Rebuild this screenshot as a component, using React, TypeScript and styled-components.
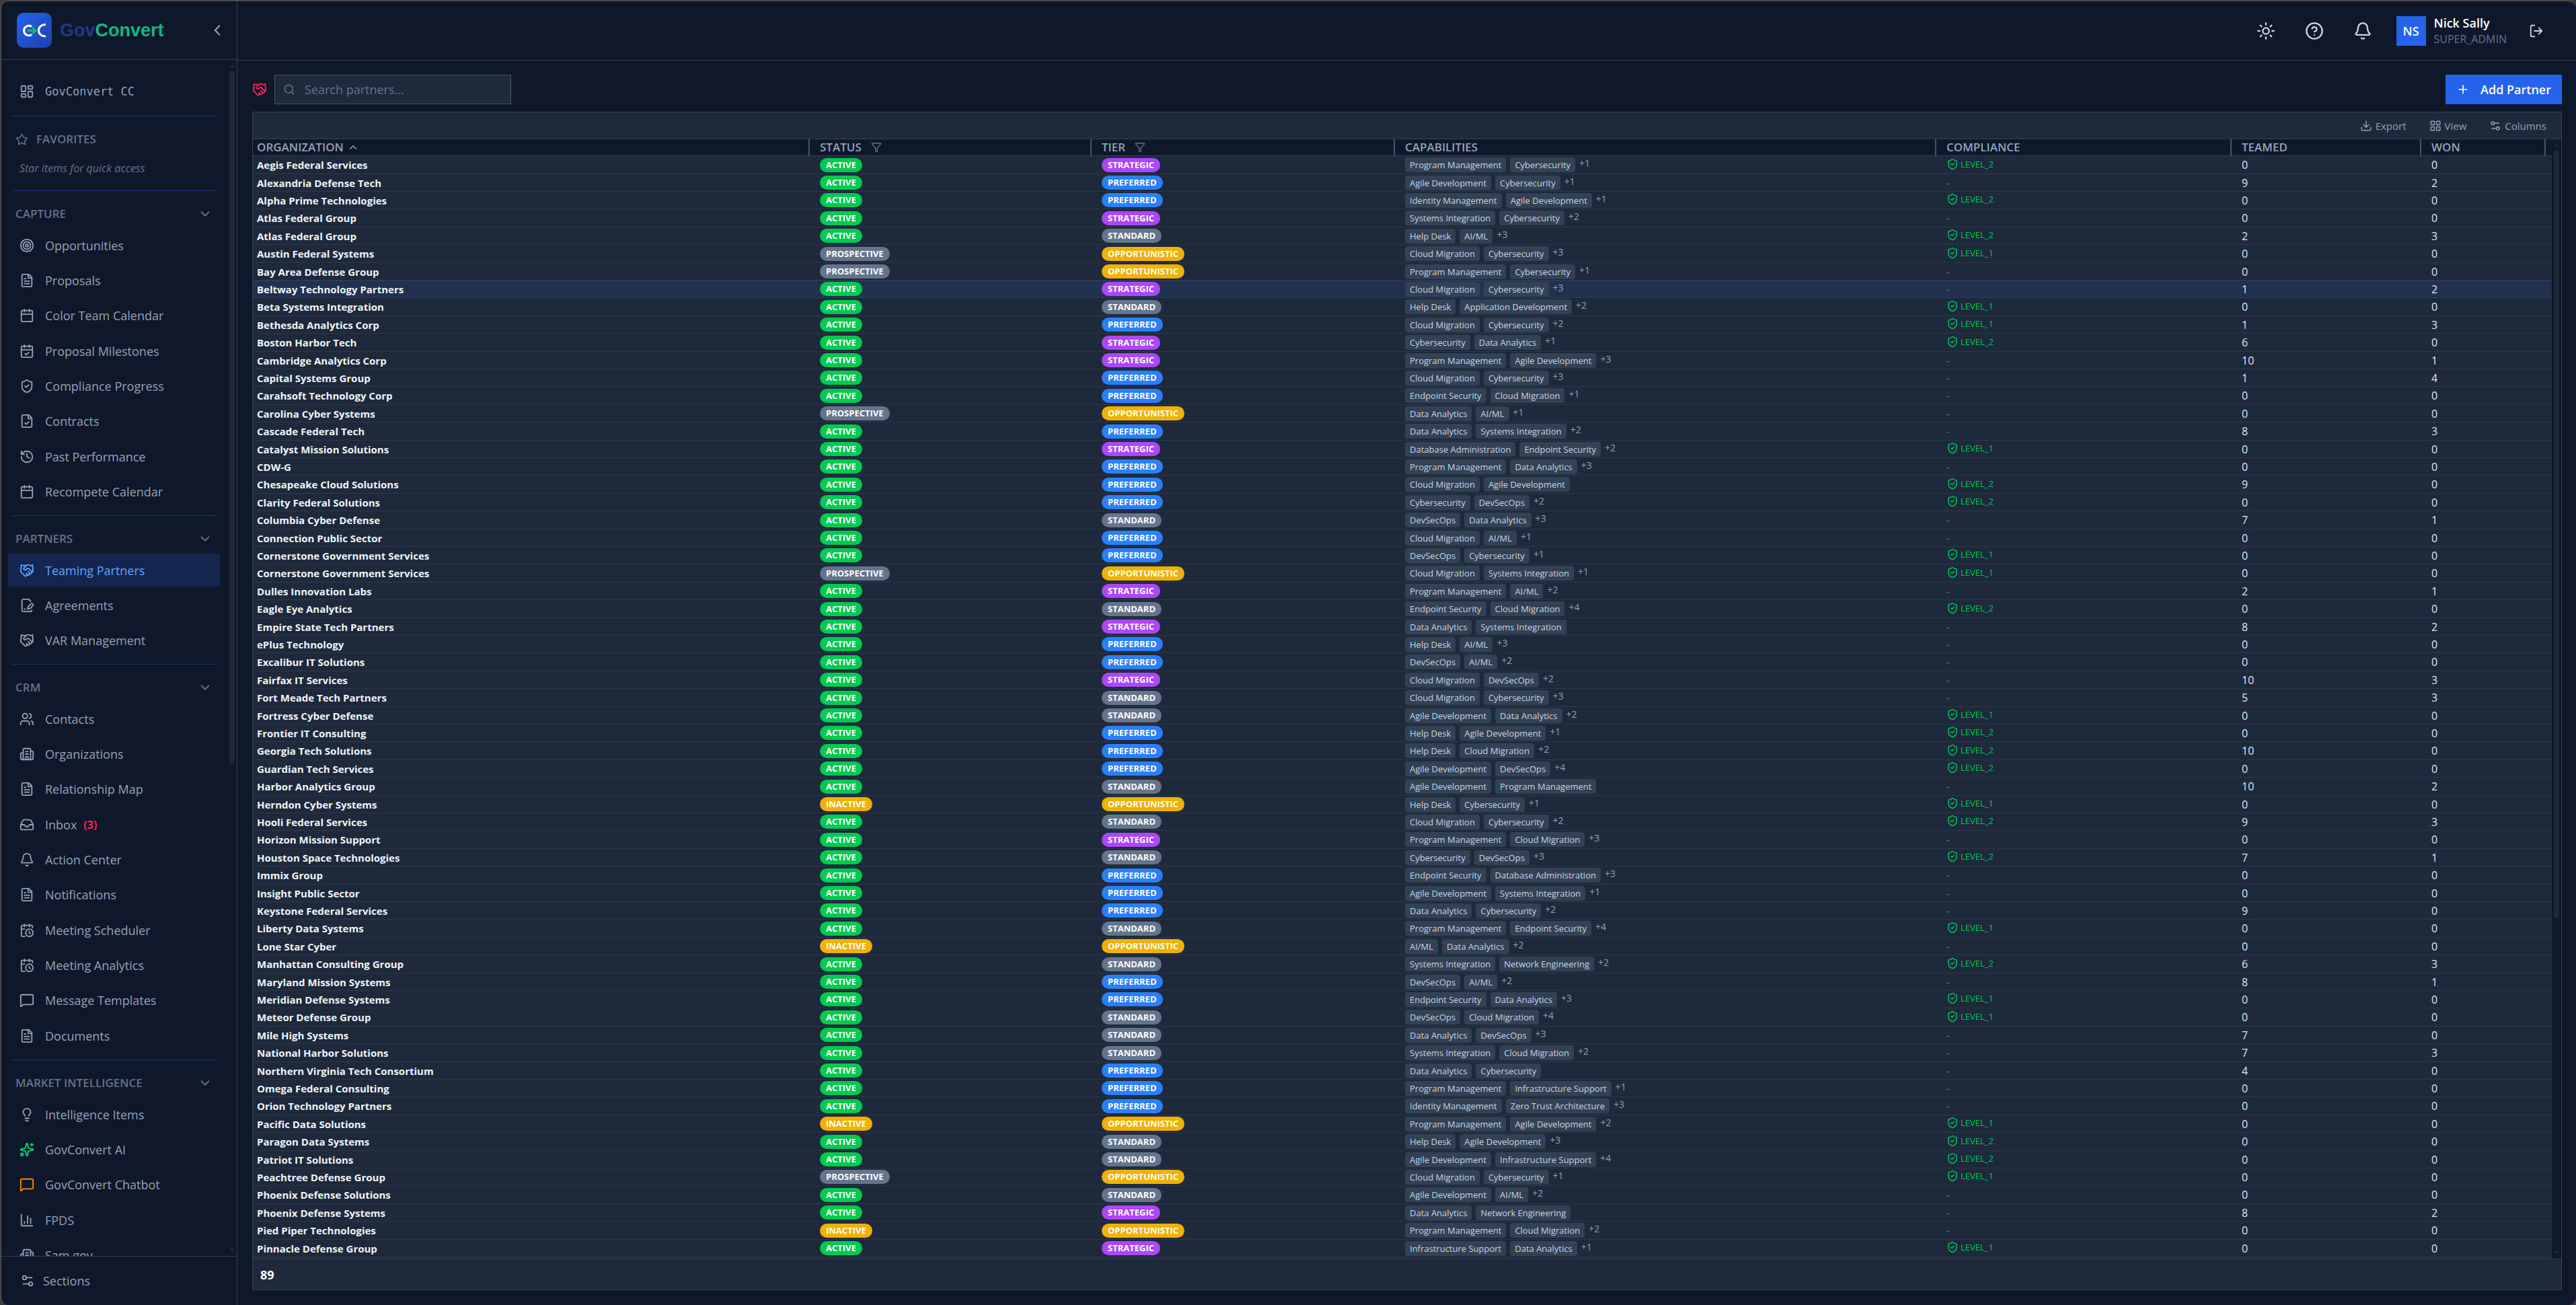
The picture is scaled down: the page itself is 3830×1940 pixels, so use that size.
import React from "react";
import styled, { createGlobalStyle, css } from "styled-components";
import {
  Bell, Building2, Calendar, CalendarCheck, CalendarClock, ChartColumn, ChevronDown, ChevronLeft, ChevronUp,
  CircleQuestionMark, Download, FileCheck, FilePenLine, FileText, Funnel, Handshake, History, Inbox,
  LayoutDashboard, LayoutGrid, Lightbulb, LogOut, MessageSquare, Plus, Search, Settings2, ShieldCheck,
  Sparkles, Star, Sun, Target, Users,
} from "lucide-react";

const color = {
  page: "#0f172a",
  panel: "#1e293b",
  line: "#334155",
  rowLine: "#2c394b",
  strong: "#475569",
  muted: "#64748b",
  soft: "#94a3b8",
  text: "#e2e8f0",
  blue: "#2563eb",
  divider: "#1b3478",
};

const GlobalStyle = createGlobalStyle`
  *, *::before, *::after { box-sizing: border-box; }
  body {
    margin: 0;
    background: #3b3a39;
    color: ${color.text};
    font-family: "Open Sans", "Noto Sans", sans-serif;
    font-size: 16px;
    line-height: 24px;
  }
  button, input { font: inherit; color: inherit; }
  button { background: none; border: 0; padding: 0; cursor: pointer; }
  a { color: inherit; text-decoration: none; }
  ul { list-style: none; margin: 0; padding: 0; }
  svg { display: block; flex: none; }
`;

const Shell = styled.div`
  display: flex;
  height: 100vh;
  overflow: hidden;
  background: ${color.page};
  border: 2px solid #4b4a48;
  border-right-width: 0;
  border-bottom-width: 0;
  border-radius: 12px;
`;

/* ---------- sidebar ---------- */

const Sidebar = styled.aside`
  display: flex;
  flex-direction: column;
  flex: none;
  width: 351px;
  border-right: 1px solid ${color.line};
`;

const Brand = styled.div`
  display: flex;
  align-items: center;
  gap: 12px;
  flex: none;
  height: 87px;
  padding: 0 16px 0 23px;
  border-bottom: 1px solid ${color.line};
`;

const Wordmark = styled.span`
  flex: 1;
  font-family: "Liberation Sans", Arial, sans-serif;
  font-size: 27px;
  font-weight: 700;
  color: #10b981;
`;

const WordmarkLead = styled.span`
  color: #1e3a8a;
`;

const IconButton = styled.button<{ $tone?: string; $size?: number }>`
  display: grid;
  place-items: center;
  width: ${(p) => p.$size ?? 44}px;
  height: 44px;
  color: ${(p) => p.$tone ?? "#cbd5e1"};
`;

const SidebarBody = styled.div`
  display: flex;
  flex: 1;
  min-height: 0;
  padding: 0 3px 0 10px;
`;

const Nav = styled.nav`
  flex: 1;
  overflow: hidden;
  padding: 23px 14px 0 0;
`;

const Section = styled.section`
  padding: 0 0 11px;
`;

const Divider = styled.hr`
  height: 1px;
  margin: 0 5px 0 6px;
  border: 0;
  background: ${color.divider};
`;

const SectionToggle = styled.button`
  display: flex;
  align-items: center;
  justify-content: space-between;
  width: 100%;
  height: 44px;
  margin-top: 12px;
  padding: 0 11px;
  color: ${color.muted};
  font-size: 17px;
  font-weight: 600;
`;

const SectionName = styled.span`
  display: flex;
  align-items: center;
  gap: 12px;
`;

const Hint = styled.p`
  margin: 0;
  padding: 0 17px;
  color: ${color.muted};
  font-size: 16px;
  font-style: italic;
  line-height: 43px;
`;

const NavList = styled.ul`
  display: flex;
  flex-direction: column;
  gap: 4px;
`;

const NavLink = styled.a<{ $active?: boolean; $mono?: boolean }>`
  display: flex;
  align-items: center;
  gap: 16px;
  height: 48px;
  padding: 0 17px;
  color: ${(p) => (p.$active ? "#60a5fa" : color.soft)};
  background: ${(p) => (p.$active ? "#142550" : "transparent")};
  font-size: 18px;
  white-space: nowrap;
  ${(p) => p.$mono && css`font-family: "DejaVu Sans Mono", monospace; font-size: 17px;`}
`;

const NavItem = styled.li`
  &:nth-child(3n + 1) ${NavLink} { height: 49px; }
`;

const HomeLink = styled.div`
  padding-bottom: 12px;
`;

const Count = styled.strong`
  margin-left: -6px;
  color: #ff2056;
  font-size: 16px;
`;

const SidebarFooter = styled.button`
  display: flex;
  align-items: center;
  gap: 12px;
  flex: none;
  height: 73px;
  padding: 0 28px;
  border-top: 1px solid ${color.line};
  color: ${color.soft};
  font-size: 18px;
`;

/* ---------- scroll rail ---------- */

const Rail = styled.div<{ $wide?: boolean }>`
  display: flex;
  flex-direction: column;
  align-items: center;
  flex: none;
  width: ${(p) => (p.$wide ? "14px" : "8px")};
  padding: 6px 0;
  background: ${color.page};
`;

const RailArrow = styled.span<{ $down?: boolean }>`
  border: 4px solid transparent;
  border-top: ${(p) => (p.$down ? `5px solid ${color.panel}` : "0")};
  border-bottom: ${(p) => (p.$down ? "0" : `5px solid ${color.panel}`)};
`;

const RailTrack = styled.div`
  flex: 1;
  width: 8px;
  margin: 6px 0;
`;

const RailThumb = styled.div<{ $share: number }>`
  height: ${(p) => p.$share}%;
  border-radius: 4px;
  background: ${color.panel};
`;

/* ---------- main ---------- */

const Main = styled.div`
  display: flex;
  flex-direction: column;
  flex: 1;
  min-width: 0;
`;

const TopBar = styled.header`
  display: flex;
  align-items: center;
  justify-content: flex-end;
  gap: 28px;
  flex: none;
  height: 88px;
  padding-right: 43px;
  border-bottom: 1px solid ${color.line};
`;

const Account = styled.div`
  display: flex;
  align-items: center;
  gap: 12px;
`;

const Avatar = styled.span`
  display: grid;
  place-items: center;
  width: 44px;
  height: 44px;
  background: ${color.blue};
  color: #fff;
  font-size: 18px;
  font-weight: 600;
`;

const AccountName = styled.div`
  color: #fff;
  font-size: 18px;
  font-weight: 600;
`;

const AccountRole = styled.div`
  color: ${color.muted};
  font-size: 16px;
`;

const Content = styled.main`
  display: flex;
  flex-direction: column;
  flex: 1;
  min-height: 0;
  gap: 11px;
  padding: 21px 21px 22px 22px;
`;

const PageTools = styled.div`
  display: flex;
  align-items: center;
  gap: 11px;
`;

const SearchField = styled.label`
  display: flex;
  align-items: center;
  gap: 14px;
  width: 352px;
  height: 44px;
  margin-right: auto;
  padding: 0 12px;
  border: 1px solid ${color.strong};
  background: ${color.panel};
  color: ${color.muted};
`;

const SearchInput = styled.input`
  flex: 1;
  min-width: 0;
  padding: 0;
  border: 0;
  outline: 0;
  background: none;
  font-size: 18px;
  &::placeholder { color: ${color.muted}; opacity: 1; }
`;

const PrimaryButton = styled.button`
  display: flex;
  align-items: center;
  gap: 16px;
  height: 44px;
  padding: 0 16px;
  background: ${color.blue};
  color: #fff;
  font-size: 18px;
  font-weight: 600;
`;

const Card = styled.section`
  display: flex;
  flex-direction: column;
  flex: 1;
  min-height: 0;
  border: 1px solid ${color.line};
  background: ${color.panel};
`;

const CardTools = styled.div`
  display: flex;
  align-items: center;
  justify-content: flex-end;
  gap: 34px;
  flex: none;
  height: 40px;
  padding: 0 22px;
  border-bottom: 1px solid ${color.line};
`;

const ToolButton = styled.button`
  display: flex;
  align-items: center;
  gap: 5px;
  color: ${color.soft};
  font-size: 15px;
`;

const TableArea = styled.div`
  display: flex;
  flex: 1;
  min-height: 0;
  overflow: hidden;
`;

const Grid = styled.table`
  flex: 1;
  width: 100%;
  align-self: flex-start;
  table-layout: fixed;
  border-collapse: separate;
  border-spacing: 0;
`;

const Col = styled.col<{ $width?: number }>`
  ${(p) => p.$width && css`width: ${p.$width}px;`}
`;

const HeadCell = styled.th`
  height: 25px;
  padding: 0 0 0 15px;
  border-right: 2px solid ${color.strong};
  border-bottom: 1px solid ${color.line};
  background: ${color.page};
  color: ${color.soft};
  font-size: 17px;
  font-weight: 600;
  line-height: 24px;
  text-align: left;
  &:first-child { padding-left: 6px; }
  &:last-child { border-right: 0; }
`;

const HeadLabel = styled.div`
  display: flex;
  align-items: center;
  gap: 14px;
`;

const HeadButton = styled.button`
  color: ${color.muted};
`;

const SortButton = styled.button`
  display: flex;
  align-items: center;
  gap: 5px;
  font-weight: 600;
`;

const Cell = styled.td`
  height: 26px;
  padding: 0 0 0 15px;
  border-bottom: 1px solid ${color.rowLine};
  font-size: 16px;
  line-height: 24px;
  white-space: nowrap;
  &:first-child { padding-left: 6px; }
`;

const OrgCell = styled(Cell)`
  color: #f1f5f9;
  font-size: 15px;
  font-weight: 700;
`;

const BodyRow = styled.tr<{ $selected?: boolean }>`
  &:nth-child(5n + 1) ${Cell}, &:nth-child(5n + 4) ${Cell} { height: 27px; }
  ${(p) => p.$selected && css`
    background: #21314f;
    ${Cell} { border-bottom-color: #2c3c66; box-shadow: inset 0 1px #2c3c66; }
  `}
`;

const Badge = styled.span<{ $fill: string }>`
  display: block;
  width: fit-content;
  height: 21px;
  padding: 0 9px;
  border-radius: 11px;
  background: ${(p) => p.$fill};
  color: #fff;
  font-size: 13px;
  font-weight: 700;
  line-height: 21px;
`;

const Chips = styled.div`
  display: flex;
  gap: 6px;
`;

const Chip = styled.span`
  padding: 0 7px;
  border-radius: 4px;
  background: ${color.line};
  color: #cbd5e1;
  font-size: 13px;
  line-height: 22px;
`;

const More = styled.span`
  color: ${color.soft};
  font-size: 14px;
  line-height: 18px;
`;

const Level = styled.span`
  display: flex;
  align-items: center;
  gap: 3px;
  padding-bottom: 3px;
  color: #00c950;
  font-size: 13px;
  line-height: 20px;
`;

const None = styled.span`
  color: ${color.muted};
`;

const CardFooter = styled.footer`
  display: flex;
  align-items: center;
  flex: none;
  height: 46px;
  padding: 0 11px;
  border-top: 1px solid ${color.line};
  color: #fff;
  font-size: 18px;
  font-weight: 700;
`;

/* ---------- data ---------- */

type Entry = { icon: React.ElementType; label: string; active?: boolean; count?: number; tint?: string };

const sections: { name: string; items: Entry[] }[] = [
  {
    name: "CAPTURE",
    items: [
      { icon: Target, label: "Opportunities" },
      { icon: FileText, label: "Proposals" },
      { icon: Calendar, label: "Color Team Calendar" },
      { icon: CalendarCheck, label: "Proposal Milestones" },
      { icon: ShieldCheck, label: "Compliance Progress" },
      { icon: FileCheck, label: "Contracts" },
      { icon: History, label: "Past Performance" },
      { icon: Calendar, label: "Recompete Calendar" },
    ],
  },
  {
    name: "PARTNERS",
    items: [
      { icon: Handshake, label: "Teaming Partners", active: true },
      { icon: FilePenLine, label: "Agreements" },
      { icon: Handshake, label: "VAR Management" },
    ],
  },
  {
    name: "CRM",
    items: [
      { icon: Users, label: "Contacts" },
      { icon: Building2, label: "Organizations" },
      { icon: FileText, label: "Relationship Map" },
      { icon: Inbox, label: "Inbox", count: 3 },
      { icon: Bell, label: "Action Center" },
      { icon: FileText, label: "Notifications" },
      { icon: CalendarClock, label: "Meeting Scheduler" },
      { icon: CalendarClock, label: "Meeting Analytics" },
      { icon: MessageSquare, label: "Message Templates" },
      { icon: FileText, label: "Documents" },
    ],
  },
  {
    name: "MARKET INTELLIGENCE",
    items: [
      { icon: Lightbulb, label: "Intelligence Items" },
      { icon: Sparkles, label: "GovConvert AI", tint: "#05df72" },
      { icon: MessageSquare, label: "GovConvert Chatbot", tint: "#ff8904" },
      { icon: ChartColumn, label: "FPDS" },
      { icon: Building2, label: "Sam.gov" },
    ],
  },
];

const statuses = {
  A: ["ACTIVE", "#00c950"],
  P: ["PROSPECTIVE", "#64748b"],
  I: ["INACTIVE", "#f0b100"],
} as const;

const tiers = {
  S: ["STRATEGIC", "#ad46ff"],
  P: ["PREFERRED", "#2b7fff"],
  T: ["STANDARD", "#64748b"],
  O: ["OPPORTUNISTIC", "#f0b100"],
} as const;

const skills = {
  ad: "Agile Development", ai: "AI/ML", ap: "Application Development", cm: "Cloud Migration", cy: "Cybersecurity",
  da: "Data Analytics", db: "Database Administration", ds: "DevSecOps", es: "Endpoint Security", hd: "Help Desk",
  im: "Identity Management", is: "Infrastructure Support", ne: "Network Engineering", pm: "Program Management",
  si: "Systems Integration", zt: "Zero Trust Architecture",
} as const;

type Partner = [
  name: string, status: keyof typeof statuses, tier: keyof typeof tiers,
  first: keyof typeof skills, second: keyof typeof skills, more: number,
  level: number, teamed: number, won: number,
];

const partners: Partner[] = [
  ["Aegis Federal Services", "A", "S", "pm", "cy", 1, 2, 0, 0],
  ["Alexandria Defense Tech", "A", "P", "ad", "cy", 1, 0, 9, 2],
  ["Alpha Prime Technologies", "A", "P", "im", "ad", 1, 2, 0, 0],
  ["Atlas Federal Group", "A", "S", "si", "cy", 2, 0, 0, 0],
  ["Atlas Federal Group", "A", "T", "hd", "ai", 3, 2, 2, 3],
  ["Austin Federal Systems", "P", "O", "cm", "cy", 3, 1, 0, 0],
  ["Bay Area Defense Group", "P", "O", "pm", "cy", 1, 0, 0, 0],
  ["Beltway Technology Partners", "A", "S", "cm", "cy", 3, 0, 1, 2],
  ["Beta Systems Integration", "A", "T", "hd", "ap", 2, 1, 0, 0],
  ["Bethesda Analytics Corp", "A", "P", "cm", "cy", 2, 1, 1, 3],
  ["Boston Harbor Tech", "A", "S", "cy", "da", 1, 2, 6, 0],
  ["Cambridge Analytics Corp", "A", "S", "pm", "ad", 3, 0, 10, 1],
  ["Capital Systems Group", "A", "P", "cm", "cy", 3, 0, 1, 4],
  ["Carahsoft Technology Corp", "A", "P", "es", "cm", 1, 0, 0, 0],
  ["Carolina Cyber Systems", "P", "O", "da", "ai", 1, 0, 0, 0],
  ["Cascade Federal Tech", "A", "P", "da", "si", 2, 0, 8, 3],
  ["Catalyst Mission Solutions", "A", "S", "db", "es", 2, 1, 0, 0],
  ["CDW-G", "A", "P", "pm", "da", 3, 0, 0, 0],
  ["Chesapeake Cloud Solutions", "A", "P", "cm", "ad", 0, 2, 9, 0],
  ["Clarity Federal Solutions", "A", "P", "cy", "ds", 2, 2, 0, 0],
  ["Columbia Cyber Defense", "A", "T", "ds", "da", 3, 0, 7, 1],
  ["Connection Public Sector", "A", "P", "cm", "ai", 1, 0, 0, 0],
  ["Cornerstone Government Services", "A", "P", "ds", "cy", 1, 1, 0, 0],
  ["Cornerstone Government Services", "P", "O", "cm", "si", 1, 1, 0, 0],
  ["Dulles Innovation Labs", "A", "S", "pm", "ai", 2, 0, 2, 1],
  ["Eagle Eye Analytics", "A", "T", "es", "cm", 4, 2, 0, 0],
  ["Empire State Tech Partners", "A", "S", "da", "si", 0, 0, 8, 2],
  ["ePlus Technology", "A", "P", "hd", "ai", 3, 0, 0, 0],
  ["Excalibur IT Solutions", "A", "P", "ds", "ai", 2, 0, 0, 0],
  ["Fairfax IT Services", "A", "S", "cm", "ds", 2, 0, 10, 3],
  ["Fort Meade Tech Partners", "A", "T", "cm", "cy", 3, 0, 5, 3],
  ["Fortress Cyber Defense", "A", "T", "ad", "da", 2, 1, 0, 0],
  ["Frontier IT Consulting", "A", "P", "hd", "ad", 1, 2, 0, 0],
  ["Georgia Tech Solutions", "A", "P", "hd", "cm", 2, 2, 10, 0],
  ["Guardian Tech Services", "A", "P", "ad", "ds", 4, 2, 0, 0],
  ["Harbor Analytics Group", "A", "T", "ad", "pm", 0, 0, 10, 2],
  ["Herndon Cyber Systems", "I", "O", "hd", "cy", 1, 1, 0, 0],
  ["Hooli Federal Services", "A", "T", "cm", "cy", 2, 2, 9, 3],
  ["Horizon Mission Support", "A", "S", "pm", "cm", 3, 0, 0, 0],
  ["Houston Space Technologies", "A", "T", "cy", "ds", 3, 2, 7, 1],
  ["Immix Group", "A", "P", "es", "db", 3, 0, 0, 0],
  ["Insight Public Sector", "A", "P", "ad", "si", 1, 0, 0, 0],
  ["Keystone Federal Services", "A", "P", "da", "cy", 2, 0, 9, 0],
  ["Liberty Data Systems", "A", "T", "pm", "es", 4, 1, 0, 0],
  ["Lone Star Cyber", "I", "O", "ai", "da", 2, 0, 0, 0],
  ["Manhattan Consulting Group", "A", "T", "si", "ne", 2, 2, 6, 3],
  ["Maryland Mission Systems", "A", "P", "ds", "ai", 2, 0, 8, 1],
  ["Meridian Defense Systems", "A", "P", "es", "da", 3, 1, 0, 0],
  ["Meteor Defense Group", "A", "T", "ds", "cm", 4, 1, 0, 0],
  ["Mile High Systems", "A", "T", "da", "ds", 3, 0, 7, 0],
  ["National Harbor Solutions", "A", "T", "si", "cm", 2, 0, 7, 3],
  ["Northern Virginia Tech Consortium", "A", "P", "da", "cy", 0, 0, 4, 0],
  ["Omega Federal Consulting", "A", "P", "pm", "is", 1, 0, 0, 0],
  ["Orion Technology Partners", "A", "P", "im", "zt", 3, 0, 0, 0],
  ["Pacific Data Solutions", "I", "O", "pm", "ad", 2, 1, 0, 0],
  ["Paragon Data Systems", "A", "T", "hd", "ad", 3, 2, 0, 0],
  ["Patriot IT Solutions", "A", "T", "ad", "is", 4, 2, 0, 0],
  ["Peachtree Defense Group", "P", "O", "cm", "cy", 1, 1, 0, 0],
  ["Phoenix Defense Solutions", "A", "T", "ad", "ai", 2, 0, 0, 0],
  ["Phoenix Defense Systems", "A", "S", "da", "ne", 0, 0, 8, 2],
  ["Pied Piper Technologies", "I", "O", "pm", "cm", 2, 0, 0, 0],
  ["Pinnacle Defense Group", "A", "S", "is", "da", 1, 1, 0, 0],
];

/* ---------- parts ---------- */

const Logo = () => (
  <svg width="52" height="52" viewBox="0 0 52 52" fill="none" aria-hidden="true">
    <defs>
      <linearGradient id="logo-fill" x1="0" y1="0" x2="52" y2="52" gradientUnits="userSpaceOnUse">
        <stop stopColor="#2563eb" />
        <stop offset="1" stopColor="#1e40af" />
      </linearGradient>
    </defs>
    <rect width="52" height="52" rx="10" fill="url(#logo-fill)" />
    <path d="M22 20.6a7.2 7.2 0 1 0 0 11.8" stroke="#fff" strokeWidth="3.4" />
    <path d="M43 17.6c-6-.4-10.600 3.400-10.600 8.600s4.600 9 10.600 8.700" stroke="#fff" strokeWidth="3" />
    <path d="M15.500 26.500h12M23 21.500l5 5-5 5" stroke="#10b981" strokeWidth="3" />
  </svg>
);

const ScrollRail = ({ share, wide }: { share: number; wide?: boolean }) => (
  <Rail $wide={wide} aria-hidden="true">
    <RailArrow />
    <RailTrack><RailThumb $share={share} /></RailTrack>
    <RailArrow $down />
  </Rail>
);

const NavEntry = ({ icon: Icon, label, active, count, tint }: Entry) => (
  <NavItem>
    <NavLink href="#" $active={active} aria-current={active ? "page" : undefined}>
      <Icon size={22} color={tint ?? "currentColor"} />
      {label}
      {count && <Count>({count})</Count>}
    </NavLink>
  </NavItem>
);

const PartnerRow = ({ partner, selected }: { partner: Partner; selected: boolean }) => {
  const [name, status, tier, first, second, more, level, teamed, won] = partner;
  return (
    <BodyRow $selected={selected}>
      <OrgCell>{name}</OrgCell>
      <Cell><Badge $fill={statuses[status][1]}>{statuses[status][0]}</Badge></Cell>
      <Cell><Badge $fill={tiers[tier][1]}>{tiers[tier][0]}</Badge></Cell>
      <Cell>
        <Chips>
          <Chip>{skills[first]}</Chip>
          <Chip>{skills[second]}</Chip>
          {more > 0 && <More>+{more}</More>}
        </Chips>
      </Cell>
      <Cell>{level ? <Level><ShieldCheck size={18} />LEVEL_{level}</Level> : <None>-</None>}</Cell>
      <Cell>{teamed}</Cell>
      <Cell>{won}</Cell>
      <Cell />
    </BodyRow>
  );
};

export default function App() {
  return (
    <>
      <GlobalStyle />
      <Shell>
        <Sidebar>
          <Brand>
            <Logo />
            <Wordmark><WordmarkLead>Gov</WordmarkLead>Convert</Wordmark>
            <IconButton $tone={color.soft} $size={26} aria-label="Collapse sidebar"><ChevronLeft size={26} /></IconButton>
          </Brand>
          <SidebarBody>
            <Nav>
              <HomeLink>
                <NavLink href="#" $mono><LayoutDashboard size={22} />GovConvert CC</NavLink>
              </HomeLink>
              <Divider />
              <Section>
                <SectionToggle><SectionName><Star size={19} />FAVORITES</SectionName></SectionToggle>
                <Hint>Star items for quick access</Hint>
              </Section>
              {sections.map((section) => (
                <React.Fragment key={section.name}>
                  <Divider />
                  <Section>
                    <SectionToggle>{section.name}<ChevronDown size={22} /></SectionToggle>
                    <NavList>
                      {section.items.map((item) => <NavEntry key={item.label} {...item} />)}
                    </NavList>
                  </Section>
                </React.Fragment>
              ))}
            </Nav>
            <ScrollRail share={59} />
          </SidebarBody>
          <SidebarFooter><Settings2 size={22} />Sections</SidebarFooter>
        </Sidebar>

        <Main>
          <TopBar>
            <IconButton aria-label="Toggle theme"><Sun size={28} /></IconButton>
            <IconButton aria-label="Help"><CircleQuestionMark size={28} /></IconButton>
            <IconButton aria-label="Notifications"><Bell size={28} /></IconButton>
            <Account>
              <Avatar>NS</Avatar>
              <div>
                <AccountName>Nick Sally</AccountName>
                <AccountRole>SUPER_ADMIN</AccountRole>
              </div>
            </Account>
            <IconButton $size={32} aria-label="Log out"><LogOut size={22} /></IconButton>
          </TopBar>

          <Content>
            <PageTools>
              <Handshake size={22} color="#ff2056" />
              <SearchField>
                <Search size={18} />
                <SearchInput type="search" placeholder="Search partners..." aria-label="Search partners" />
              </SearchField>
              <PrimaryButton><Plus size={20} />Add Partner</PrimaryButton>
            </PageTools>

            <Card>
              <CardTools>
                <ToolButton><Download size={18} />Export</ToolButton>
                <ToolButton><LayoutGrid size={18} />View</ToolButton>
                <ToolButton><Settings2 size={18} />Columns</ToolButton>
              </CardTools>
              <TableArea>
                <Grid>
                  <colgroup>
                    <Col $width={828} />
                    <Col $width={419} />
                    <Col $width={451} />
                    <Col />
                    <Col $width={439} />
                    <Col $width={282} />
                    <Col $width={185} />
                    <Col $width={9} />
                  </colgroup>
                  <thead>
                    <tr>
                      <HeadCell aria-sort="ascending"><SortButton>ORGANIZATION<ChevronUp size={18} /></SortButton></HeadCell>
                      <HeadCell>
                        <HeadLabel>STATUS<HeadButton aria-label="Filter by status"><Funnel size={16} /></HeadButton></HeadLabel>
                      </HeadCell>
                      <HeadCell>
                        <HeadLabel>TIER<HeadButton aria-label="Filter by tier"><Funnel size={16} /></HeadButton></HeadLabel>
                      </HeadCell>
                      <HeadCell>CAPABILITIES</HeadCell>
                      <HeadCell>COMPLIANCE</HeadCell>
                      <HeadCell>TEAMED</HeadCell>
                      <HeadCell>WON</HeadCell>
                      <HeadCell />
                    </tr>
                  </thead>
                  <tbody>
                    {partners.map((partner, index) => (
                      <PartnerRow key={index} partner={partner} selected={partner[0] === "Beltway Technology Partners"} />
                    ))}
                  </tbody>
                </Grid>
                <ScrollRail share={70} wide />
              </TableArea>
              <CardFooter>89</CardFooter>
            </Card>
          </Content>
        </Main>
      </Shell>
    </>
  );
}
